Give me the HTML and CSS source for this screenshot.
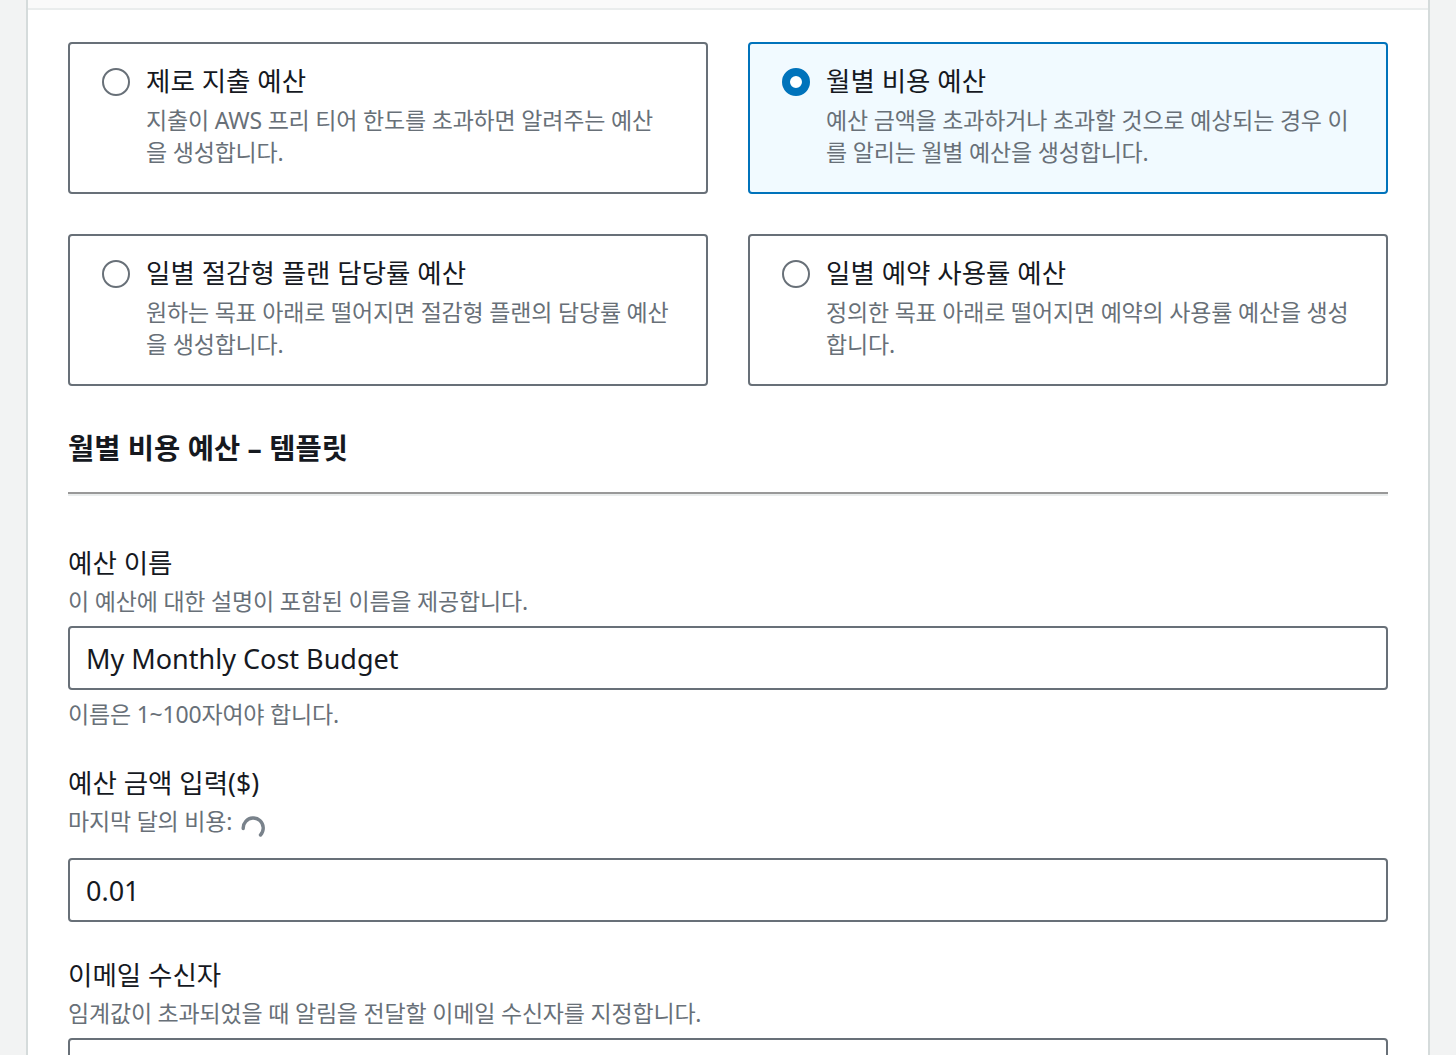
FILE: index.html
```html
<!DOCTYPE html>
<html lang="ko">
<head>
  <meta charset="UTF-8" />
  <title>예산 생성</title>
  <link rel="stylesheet" href="styles.css">
</head>
<body>
  <div class="panel">
    <div class="panel-top"></div>
    <div class="panel-body">
      <div class="tiles">
        <label class="tile">
          <span class="radio"></span>
          <span class="tile-text">
            <span class="tile-title">제로 지출 예산</span>
            <span class="tile-desc">지출이 AWS 프리 티어 한도를 초과하면 알려주는 예산<br>을 생성합니다.</span>
          </span>
        </label>
        <label class="tile tile-on">
          <span class="radio radio-on"></span>
          <span class="tile-text">
            <span class="tile-title">월별 비용 예산</span>
            <span class="tile-desc">예산 금액을 초과하거나 초과할 것으로 예상되는 경우 이<br>를 알리는 월별 예산을 생성합니다.</span>
          </span>
        </label>
        <label class="tile">
          <span class="radio"></span>
          <span class="tile-text">
            <span class="tile-title">일별 절감형 플랜 담당률 예산</span>
            <span class="tile-desc">원하는 목표 아래로 떨어지면 절감형 플랜의 담당률 예산<br>을 생성합니다.</span>
          </span>
        </label>
        <label class="tile">
          <span class="radio"></span>
          <span class="tile-text">
            <span class="tile-title">일별 예약 사용률 예산</span>
            <span class="tile-desc">정의한 목표 아래로 떨어지면 예약의 사용률 예산을 생성<br>합니다.</span>
          </span>
        </label>
      </div>

      <h2 class="section-title">월별 비용 예산 – 템플릿</h2>
      <div class="divider"></div>

      <div class="field field-first">
        <div class="field-label">예산 이름</div>
        <div class="field-desc">이 예산에 대한 설명이 포함된 이름을 제공합니다.</div>
        <input class="input" type="text" value="My Monthly Cost Budget">
        <div class="field-hint">이름은 1~100자여야 합니다.</div>
      </div>

      <div class="field field-amount">
        <div class="field-label">예산 금액 입력($)</div>
        <div class="field-desc field-desc-spin">마지막 달의 비용:
          <svg class="spinner" width="24" height="24" viewBox="0 0 24 24"><path d="M2.200 13.500 A10 10 0 0 1 22.200 12.500 A10 10 0 0 1 19.500 20" fill="none" stroke="#79828b" stroke-width="3.400" stroke-linecap="round"/></svg>
        </div>
        <input class="input" type="text" value="0.01">
      </div>

      <div class="field field-email">
        <div class="field-label">이메일 수신자</div>
        <div class="field-desc">임계값이 초과되었을 때 알림을 전달할 이메일 수신자를 지정합니다.</div>
        <input class="input" type="text">
      </div>
    </div>
  </div>
</body>
</html>
```
FILE: styles.css
```css
html, body {
  margin: 0;
  height: 1055px;
  overflow: hidden;
}

body {
  background: #f2f3f3;
  font-family: "Noto Sans", "Noto Sans CJK KR", sans-serif;
  color: #16191f;
}

.panel {
  width: 1400px;
  margin-left: 28px;
  height: 1055px;
  background: #fff;
  box-shadow: 0 0 0 2px #d5dbdb;
  overflow: hidden;
}

.panel-top {
  height: 8px;
  background: #fafafa;
  border-bottom: 2px solid #eaeded;
}

.panel-body {
  padding: 32px 40px 0;
}

.tiles {
  display: grid;
  grid-template-columns: 640px 640px;
  column-gap: 40px;
  row-gap: 40px;
}

.tile {
  box-sizing: border-box;
  height: 152px;
  display: flex;
  gap: 16px;
  padding: 22px 32px;
  border: 2px solid #687078;
  border-radius: 4px;
  background: #fff;
}

.tile-on {
  border-color: #0073bb;
  background: #f1faff;
}

.radio {
  box-sizing: border-box;
  flex: none;
  width: 28px;
  height: 28px;
  margin-top: 2px;
  border: 2px solid #687078;
  border-radius: 50%;
  background: #fff;
}

.radio-on {
  border: 8px solid #0073bb;
}

.tile-text {
  display: flex;
  flex-direction: column;
}

.tile-title {
  font-size: 26.500px;
  line-height: 30px;
  white-space: nowrap;
}

.tile-desc {
  margin-top: 8px;
  font-size: 23px;
  letter-spacing: -0.2px;
  line-height: 32px;
  color: #687078;
  white-space: nowrap;
}

.section-title {
  margin: 44px 0 0;
  font-size: 28.500px;
  line-height: 36px;
  font-weight: 700;
}

.divider {
  margin-top: 26px;
  height: 2px;
  background: #999;
  border-bottom: 2px solid #eaeded;
}

.field-first {
  margin-top: 50px;
}

.field-amount {
  margin-top: 36px;
}

.field-email {
  margin-top: 36px;
}

.field-label {
  font-size: 26.500px;
  line-height: 34px;
}

.field-desc {
  display: flex;
  align-items: center;
  gap: 9px;
  height: 42px;
  font-size: 23px;
  letter-spacing: -0.2px;
  line-height: 32px;
  color: #687078;
}

.field-desc-spin {
  margin-bottom: 16px;
}

.spinner {
  margin-top: 12px;
}

.input {
  display: block;
  box-sizing: border-box;
  width: 100%;
  height: 64px;
  margin-top: 4px;
  padding: 0 16px;
  border: 2px solid #687078;
  border-radius: 4px;
  background: #fff;
  font-family: inherit;
  font-size: 27px;
  color: #16191f;
}

.field-hint {
  margin-top: 8px;
  font-size: 23px;
  letter-spacing: -0.2px;
  line-height: 32px;
  color: #687078;
}
```
